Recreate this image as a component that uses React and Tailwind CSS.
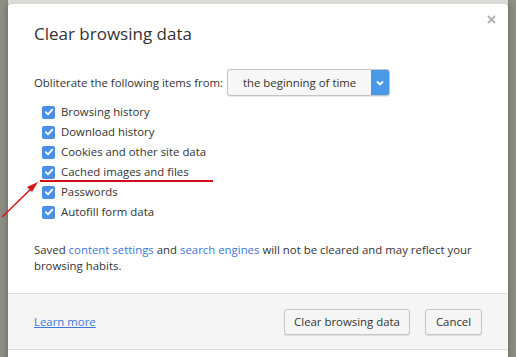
import React from "react";

const items = [
  "Browsing history",
  "Download history",
  "Cookies and other site data",
  "Cached images and files",
  "Passwords",
  "Autofill form data",
];

function Check() {
  return (
    <span className="flex h-[13px] w-[13px] items-center justify-center rounded-[2px] bg-[#4a8fe3]">
      <svg width="10" height="10" viewBox="0 0 10 10">
        <path d="M1.8 5.2 L4 7.3 L8.3 2.6" fill="none" stroke="#fff" strokeWidth="1.8" strokeLinecap="round" strokeLinejoin="round" />
      </svg>
    </span>
  );
}

export default function App() {
  return (
    <div
      className="relative h-[357px] w-[516px] overflow-hidden bg-[#8c8e82]"
      style={{ fontFamily: '"Segoe UI", "Open Sans", "Noto Sans", sans-serif' }}
    >
      <div className="absolute left-[8px] top-0 h-[4px] w-[500px] bg-[#d9d9d6]" />
      <div className="ml-[8px] mt-[4px] flex w-[500px] flex-col rounded-t-[2px] bg-white shadow-[0_0_6px_rgba(0,0,0,0.3)]">
        <div className="relative px-[26px] pt-[18px]">
          <div className="h-[24px] text-[17px] leading-[24px] text-[#333]">Clear browsing data</div>
          <svg className="absolute right-[12px] top-[11px]" width="9" height="9" viewBox="0 0 9 9">
            <path d="M1 1 L8 8 M8 1 L1 8" stroke="#b3b3b3" strokeWidth="2" />
          </svg>
        </div>
        <div className="flex items-center gap-[4px] px-[26px] pt-[23px] text-[11.4px] text-[#333]">
          <span>Obliterate the following items from:</span>
          <div className="flex h-[27px] w-[163px] items-stretch overflow-hidden rounded-[3px] border border-[#c4c4c4] bg-[#f7f7f7] shadow-[0_1px_1px_rgba(0,0,0,0.1)]">
            <span className="flex flex-1 items-center justify-center text-[11.4px] text-[#333]">the beginning of time</span>
            <span className="flex w-[18px] items-center justify-center bg-[#4a98e8]">
              <svg width="10" height="8" viewBox="0 0 10 8">
                <path d="M2 2.5 L5 5.5 L8 2.5" fill="none" stroke="#fff" strokeWidth="1.8" />
              </svg>
            </span>
          </div>
        </div>
        <div className="flex flex-col px-[34px] pt-[6px]">
          {items.map((t) => (
            <div key={t} className="flex h-[20px] items-center gap-[6px] text-[11.4px] text-[#333]">
              <Check />
              <span>{t}</span>
            </div>
          ))}
        </div>
        <p className="px-[26px] pt-[20px] text-[11.4px] leading-[16px] text-[#333]">
          Saved <a className="text-[#3b78d8]">content settings</a> and <a className="text-[#3b78d8]">search engines</a> will not be cleared and may reflect your
          <br />
          browsing habits.
        </p>
        <div className="mt-[19px] flex h-[57px] items-center border-y border-[#dcdcdc] bg-[#f5f5f5] px-[26px]">
          <span className="text-[11.4px] text-[#3b78d8] underline">Learn more</span>
          <div className="ml-auto flex gap-[15px]">
            <button className="h-[26px] w-[126px] rounded-[3px] border border-[#c6c6c6] bg-[#f5f5f5] text-[11.4px] text-[#333] shadow-[0_1px_1px_rgba(0,0,0,0.1)]">
              Clear browsing data
            </button>
            <button className="h-[26px] w-[57px] rounded-[3px] border border-[#c6c6c6] bg-[#f5f5f5] text-[11.4px] text-[#333] shadow-[0_1px_1px_rgba(0,0,0,0.1)]">
              Cancel
            </button>
          </div>
        </div>
        <div className="h-[10px] bg-white" />
      </div>
      <div className="absolute left-[40px] top-[180px] h-[2px] w-[173px] bg-[#d0111b]" />
      <svg className="absolute left-0 top-[175px]" width="50" height="50" viewBox="0 0 50 50">
        <line x1="2" y1="42" x2="33" y2="12" stroke="#d9161c" strokeWidth="1.6" />
        <path d="M38 7 L27 12 L32 17 Z" fill="#d9161c" />
      </svg>
    </div>
  );
}
